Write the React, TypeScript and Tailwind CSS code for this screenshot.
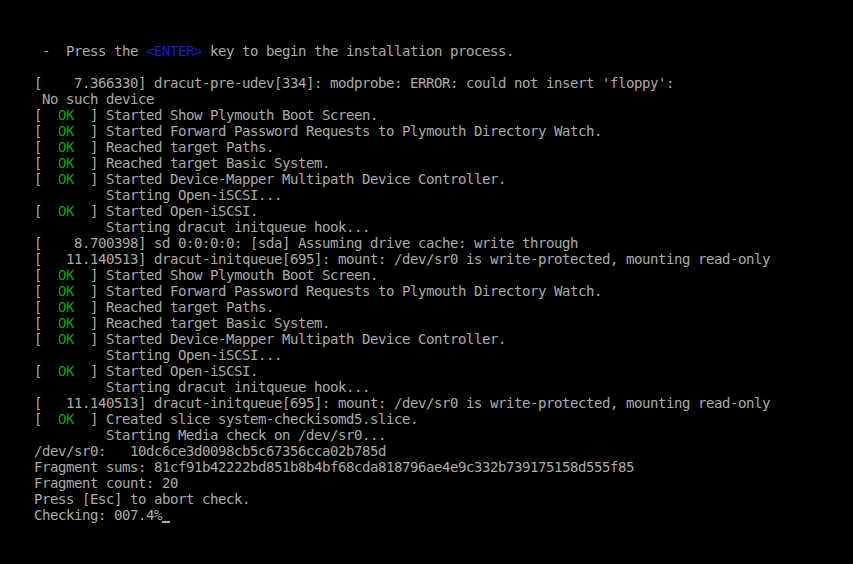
import React from "react";

type Line = { ok?: boolean; text: string; enter?: boolean; cursor?: boolean };

const lines: Line[] = [
  { text: " -  Press the ", enter: true },
  { text: "" },
  { text: "[    7.366330] dracut-pre-udev[334]: modprobe: ERROR: could not insert 'floppy':" },
  { text: " No such device" },
  { ok: true, text: "Started Show Plymouth Boot Screen." },
  { ok: true, text: "Started Forward Password Requests to Plymouth Directory Watch." },
  { ok: true, text: "Reached target Paths." },
  { ok: true, text: "Reached target Basic System." },
  { ok: true, text: "Started Device-Mapper Multipath Device Controller." },
  { text: "         Starting Open-iSCSI..." },
  { ok: true, text: "Started Open-iSCSI." },
  { text: "         Starting dracut initqueue hook..." },
  { text: "[    8.700398] sd 0:0:0:0: [sda] Assuming drive cache: write through" },
  { text: "[   11.140513] dracut-initqueue[695]: mount: /dev/sr0 is write-protected, mounting read-only" },
  { ok: true, text: "Started Show Plymouth Boot Screen." },
  { ok: true, text: "Started Forward Password Requests to Plymouth Directory Watch." },
  { ok: true, text: "Reached target Paths." },
  { ok: true, text: "Reached target Basic System." },
  { ok: true, text: "Started Device-Mapper Multipath Device Controller." },
  { text: "         Starting Open-iSCSI..." },
  { ok: true, text: "Started Open-iSCSI." },
  { text: "         Starting dracut initqueue hook..." },
  { text: "[   11.140513] dracut-initqueue[695]: mount: /dev/sr0 is write-protected, mounting read-only" },
  { ok: true, text: "Created slice system-checkisomd5.slice." },
  { text: "         Starting Media check on /dev/sr0..." },
  { text: "/dev/sr0:   10dc6ce3d0098cb5c67356cca02b785d" },
  { text: "Fragment sums: 81cf91b42222bd851b8b4bf68cda818796ae4e9c332b739175158d555f85" },
  { text: "Fragment count: 20" },
  { text: "Press [Esc] to abort check." },
  { text: "Checking: 007.4%", cursor: true },
];

const App = () => {
  return (
    <div className="w-[853px] h-[564px] bg-black overflow-hidden pt-[43px] pl-[34px]">
      <div className="font-['DejaVu_Sans_Mono',monospace] text-[14px] tracking-[-0.43px] leading-[16px] text-[#aaaaaa] whitespace-pre">
        {lines.map((l, i) => (
          <div key={i} className="h-4">
            {l.ok && (
              <>
                {"[  "}
                <span className="text-[#00aa00]">OK</span>
                {"  ] "}
              </>
            )}
            {l.text}
            {l.enter && (
              <>
                <span className="text-[#1c1cc8]">{"<ENTER>"}</span>
                {" key to begin the installation process."}
              </>
            )}
            {l.cursor && <span className="inline-block w-2 h-[2px] bg-[#aaaaaa] align-[-3px]" />}
          </div>
        ))}
      </div>
    </div>
  );
};

export default App;
